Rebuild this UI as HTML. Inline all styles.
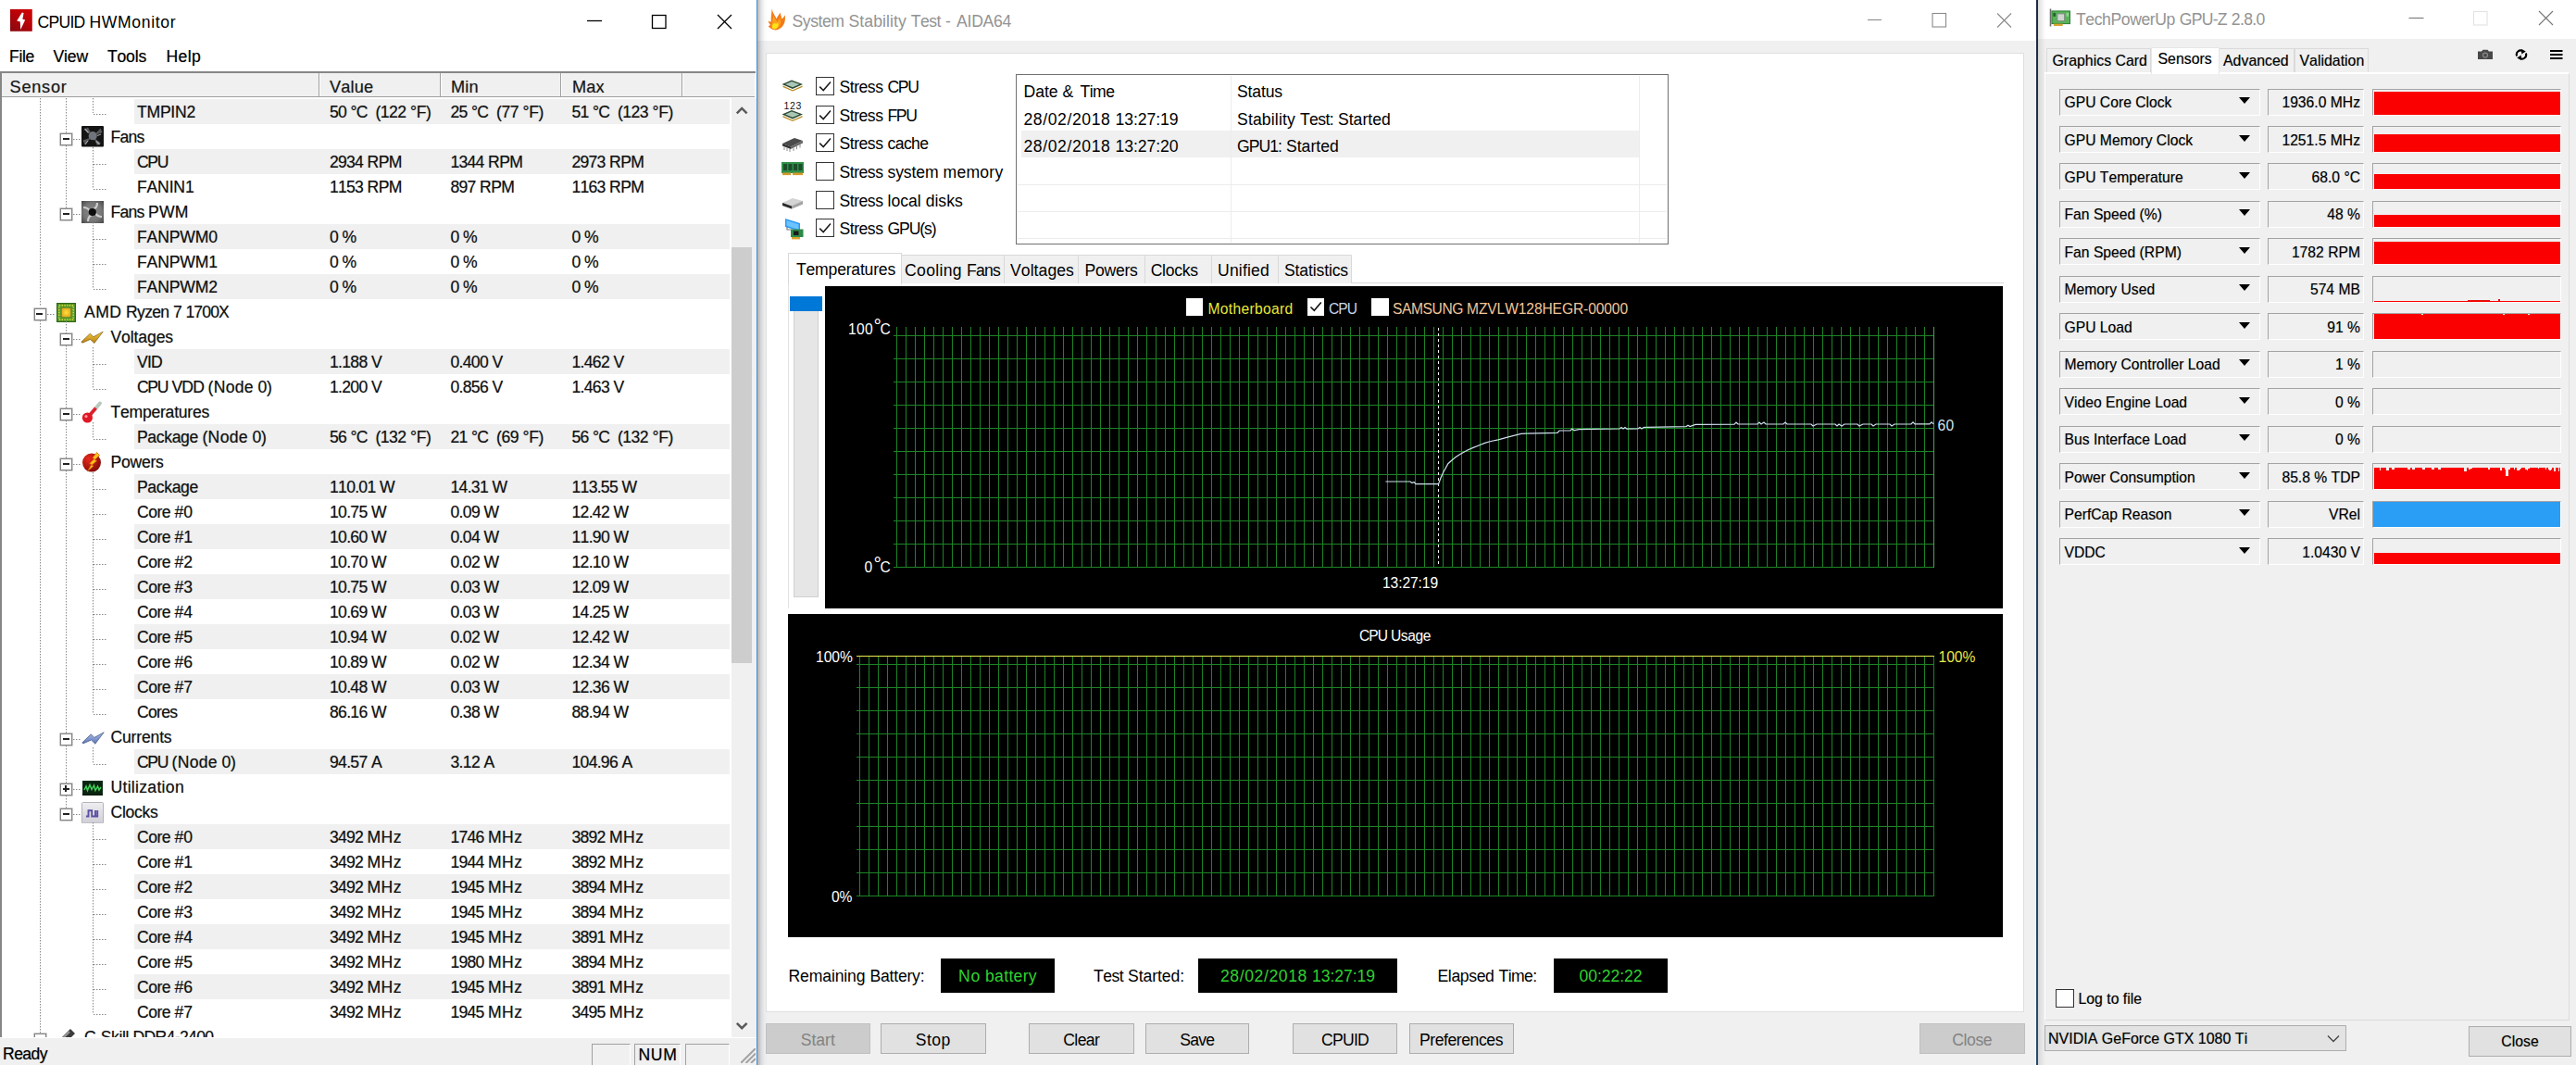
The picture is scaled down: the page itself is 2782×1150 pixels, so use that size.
<!DOCTYPE html>
<html lang="en"><head><meta charset="utf-8"><title>Stress test</title>
<style>
*{box-sizing:border-box;margin:0;padding:0}
html,body{width:2782px;height:1150px;overflow:hidden;background:#fff}
body{position:relative;font-family:"Liberation Sans",sans-serif;font-size:17.6px;color:#000;font-kerning:none}
b{font-weight:normal}
.a{position:absolute}
.t{position:absolute;white-space:nowrap;line-height:20px;height:20px}
/* ---------- HWMonitor ---------- */
#hw{position:absolute;left:0;top:0;width:817px;height:1150px;background:#fff;overflow:hidden}
#hw .row span,#hw .menu,#hw .hdr span,#hw .sbt{text-shadow:0 0 1px rgba(0,0,0,.4)}
#hw .title{left:40.5px;top:14px;font-size:17.6px;word-spacing:0.04px}
#hw .menu{top:50.5px;font-size:17.6px}
#hw .hdr{position:absolute;left:2px;top:79px;width:813px;height:26px;background:#f0f0f0;border-bottom:1px solid #a0a0a0}
#hw .hdr span{position:absolute;top:4.6px;font-size:18.2px;line-height:20px;color:#1a1a1a;letter-spacing:.15px}
#hw .hdr i{position:absolute;top:0;width:2px;height:25px;border-left:1px solid #a0a0a0;border-right:1px solid #fff}
.row{position:absolute;left:0;width:788px;height:27px}
.row .sh{position:absolute;left:144.5px;top:0;width:643.5px;height:26.5px;background:#f0f0f0}
.row span{position:absolute;top:4.2px;line-height:20px;white-space:pre;font-size:17.6px;word-spacing:-0.39px;color:#111}
.vd{position:absolute;width:1px;background-image:linear-gradient(#868686 0 1px,rgba(134,134,134,.45) 1px 2px,transparent 2px 3px);background-size:1px 3px}
.hd{position:absolute;height:1px;background-image:linear-gradient(90deg,#868686 0 1px,rgba(134,134,134,.45) 1px 2px,transparent 2px 3px);background-size:3px 1px}
.xb{position:absolute;width:13px;height:13px;border:1px solid #858585;background:#fff;box-shadow:0 0 0 .6px #a8a8a8}
.xb:before{content:"";position:absolute;left:1.7px;top:4.3px;width:7.2px;height:1.8px;background:#222}
.xb.p:after{content:"";position:absolute;left:4.4px;top:1.6px;width:1.8px;height:7.2px;background:#222}
</style></head>
<body>

<div id="hw">
<svg class="a" style="left:11px;top:10px" width="24" height="24" viewBox="0 0 24 24"><defs><linearGradient id="hwg" x1="1" y1="0" x2="0.2" y2="1"><stop offset="0" stop-color="#d40404"/><stop offset=".5" stop-color="#b80308"/><stop offset="1" stop-color="#8c0a10"/></linearGradient></defs><rect x="0" y="0" width="23.8" height="23.8" fill="url(#hwg)"/><path d="M12.8 3.4 L7.2 12.6 L10.8 13.6 L11.2 22 L16.2 11.4 L13.4 10.7 L14.6 3.9 Z" fill="#fff"/></svg>
<div class="t title"><b style="letter-spacing:-.75px">CPUID</b> <b style="letter-spacing:.64px">HWMonitor</b></div>
<svg class="a" style="left:620px;top:8px" width="190" height="30" viewBox="0 0 190 30"><g stroke="#000" stroke-width="1.3" fill="none"><path d="M14 14.5 H30"/><rect x="84.5" y="8.5" width="14.5" height="14"/><path d="M155 8 L170 23 M170 8 L155 23"/></g></svg>
<div class="a" style="left:0;top:0;width:817px;height:1150px">
<div class="t menu" style="left:10px"><b style="letter-spacing:-.34px">File</b></div>
<div class="t menu" style="left:57.5px"><b style="letter-spacing:-.16px">View</b></div>
<div class="t menu" style="left:116px"><b style="letter-spacing:-.21px">Tools</b></div>
<div class="t menu" style="left:179.5px"><b style="letter-spacing:.33px">Help</b></div>
<div class="a" style="left:0;top:77px;width:816px;height:2px;background:#868686"></div>
<div class="a" style="left:0;top:77px;width:2px;height:1043px;background:#868686"></div>
<div class="hdr"><span style="left:8.5px;letter-spacing:.75px">Sensor</span><span style="left:354px">Value</span><span style="left:485px">Min</span><span style="left:616px">Max</span>
<i style="left:342px"></i>
<i style="left:472.5px"></i>
<i style="left:603px"></i>
<i style="left:734px"></i>
</div>
<div class="a" style="left:2px;top:106px;width:786px;height:1014px;overflow:hidden">
<div class="a" style="left:-2px;top:-106px;width:790px;height:1130px">
<div class="vd" style="left:43px;top:106px;height:224px"></div>
<div class="vd" style="left:43px;top:343px;height:787px"></div>
<div class="row" style="top:107px">
<div class="sh"></div>
<div class="hd" style="left:101px;top:16px;width:15px"></div>
<span style="left:148px"><b style="letter-spacing:-.26px">TMPIN2</b></span><span style="left:356px"><b style="letter-spacing:-.79px">50</b> <b style="letter-spacing:-.87px">°C</b>  <b style="letter-spacing:-.56px">(122</b> <b style="letter-spacing:-.38px">°F)</b></span><span style="left:486.5px"><b style="letter-spacing:-.79px">25</b> <b style="letter-spacing:-.87px">°C</b>  <b style="letter-spacing:-.48px">(77</b> <b style="letter-spacing:-.38px">°F)</b></span><span style="left:617.5px"><b style="letter-spacing:-.79px">51</b> <b style="letter-spacing:-.87px">°C</b>  <b style="letter-spacing:-.56px">(123</b> <b style="letter-spacing:-.38px">°F)</b></span>
</div>
<div class="row" style="top:134px">
<div class="hd" style="left:79px;top:16px;width:9px"></div>
<div class="xb" style="left:65px;top:9.5px"></div>
<svg class="a" style="left:87.5px;top:2px" width="24" height="22.5" viewBox="0 0 24 22.5"><rect width="24" height="22.5" rx="1" fill="#141414"/><g fill="#55575b"><path d="M12 11 L3 4 L7 1.5 Z"/><path d="M12.5 11 L20.5 2.5 L22.5 7 Z"/><path d="M12.5 12 L21 18.5 L17 21 Z"/><path d="M11.5 12 L3.5 20 L1.5 15.5 Z"/></g><g stroke="#c9c9c9" stroke-width="1.2" opacity=".75"><path d="M3.5 3 L7.5 7.5 M21 9 L17 10.5 M19.5 20 L16 16.5 M4 20 L7 16"/></g><circle cx="12.2" cy="10.7" r="4.6" fill="#70747c"/></svg>
<span style="left:119.5px"><b style="letter-spacing:-.78px">Fans</b></span>
</div>
<div class="row" style="top:161px">
<div class="sh"></div>
<div class="hd" style="left:101px;top:16px;width:15px"></div>
<span style="left:148px"><b style="letter-spacing:-1.39px">CPU</b></span><span style="left:356px"><b style="letter-spacing:-.79px">2934</b> <b style="letter-spacing:-.54px">RPM</b></span><span style="left:486.5px"><b style="letter-spacing:-.79px">1344</b> <b style="letter-spacing:-.54px">RPM</b></span><span style="left:617.5px"><b style="letter-spacing:-.79px">2973</b> <b style="letter-spacing:-.54px">RPM</b></span>
</div>
<div class="row" style="top:188px">
<div class="hd" style="left:101px;top:16px;width:15px"></div>
<span style="left:148px"><b style="letter-spacing:-.18px">FANIN1</b></span><span style="left:356px"><b style="letter-spacing:-.79px">1153</b> <b style="letter-spacing:-.54px">RPM</b></span><span style="left:486.5px"><b style="letter-spacing:-.79px">897</b> <b style="letter-spacing:-.54px">RPM</b></span><span style="left:617.5px"><b style="letter-spacing:-.79px">1163</b> <b style="letter-spacing:-.54px">RPM</b></span>
</div>
<div class="row" style="top:215px">
<div class="hd" style="left:79px;top:16px;width:9px"></div>
<div class="xb" style="left:65px;top:9.5px"></div>
<svg class="a" style="left:87.5px;top:1.8px" width="24" height="24" viewBox="0 0 24 24"><defs><radialGradient id="pw" cx=".5" cy=".5" r=".75"><stop offset="0" stop-color="#8c8c8c"/><stop offset=".55" stop-color="#767676"/><stop offset="1" stop-color="#3c3c3c"/></radialGradient></defs><rect width="24" height="24" fill="url(#pw)"/><g stroke="#e2e2e2" stroke-width="2.2" fill="none" opacity=".8"><path d="M2 7 C6 7 8 9 9 11"/><path d="M17 2 C17 6 15 8 13 9"/><path d="M22 17 C18 17 16 15 15 13"/><path d="M7 22 C7 18 9 16 11 15"/></g><circle cx="11.8" cy="12" r="4.1" fill="#0d0d0d"/></svg>
<span style="left:119.5px"><b style="letter-spacing:-.78px">Fans</b> <b style="letter-spacing:.16px">PWM</b></span>
</div>
<div class="row" style="top:242px">
<div class="sh"></div>
<div class="hd" style="left:101px;top:16px;width:15px"></div>
<span style="left:148px"><b style="letter-spacing:-.14px">FANPWM0</b></span><span style="left:356px"><b style="letter-spacing:-.79px">0</b> <b style="letter-spacing:-.65px">%</b></span><span style="left:486.5px"><b style="letter-spacing:-.79px">0</b> <b style="letter-spacing:-.65px">%</b></span><span style="left:617.5px"><b style="letter-spacing:-.79px">0</b> <b style="letter-spacing:-.65px">%</b></span>
</div>
<div class="row" style="top:269px">
<div class="hd" style="left:101px;top:16px;width:15px"></div>
<span style="left:148px"><b style="letter-spacing:-.14px">FANPWM1</b></span><span style="left:356px"><b style="letter-spacing:-.79px">0</b> <b style="letter-spacing:-.65px">%</b></span><span style="left:486.5px"><b style="letter-spacing:-.79px">0</b> <b style="letter-spacing:-.65px">%</b></span><span style="left:617.5px"><b style="letter-spacing:-.79px">0</b> <b style="letter-spacing:-.65px">%</b></span>
</div>
<div class="row" style="top:296px">
<div class="sh"></div>
<div class="hd" style="left:101px;top:16px;width:15px"></div>
<span style="left:148px"><b style="letter-spacing:-.14px">FANPWM2</b></span><span style="left:356px"><b style="letter-spacing:-.79px">0</b> <b style="letter-spacing:-.65px">%</b></span><span style="left:486.5px"><b style="letter-spacing:-.79px">0</b> <b style="letter-spacing:-.65px">%</b></span><span style="left:617.5px"><b style="letter-spacing:-.79px">0</b> <b style="letter-spacing:-.65px">%</b></span>
</div>
<div class="row" style="top:323px">
<div class="hd" style="left:51px;top:16px;width:9px"></div>
<div class="xb" style="left:36.5px;top:9.5px"></div>
<svg class="a" style="left:60.5px;top:3.5px" width="21" height="21" viewBox="0 0 21 21"><rect x=".6" y=".6" width="19.8" height="19.8" fill="#5a9a2c" stroke="#2f6a18" stroke-width="1.2"/><rect x="2.8" y="2.8" width="15.4" height="15.4" fill="none" stroke="#d9dc3a" stroke-width="1.4" stroke-dasharray="1.4 1.4"/><defs><radialGradient id="cpg" cx=".5" cy=".5" r=".6"><stop offset="0" stop-color="#ffe23a"/><stop offset="1" stop-color="#e09a18"/></radialGradient></defs><rect x="5.2" y="5.2" width="10.6" height="10.6" fill="url(#cpg)" stroke="#4f8a22" stroke-width=".8"/></svg>
<span style="left:91px"><b style="letter-spacing:.46px">AMD</b> <b style="letter-spacing:-.68px">Ryzen</b> <b style="letter-spacing:-.79px">7</b> <b style="letter-spacing:-.88px">1700X</b></span>
</div>
<div class="row" style="top:350px">
<div class="hd" style="left:79px;top:16px;width:9px"></div>
<div class="xb" style="left:65px;top:9.5px"></div>
<svg class="a" style="left:87px;top:6.5px" width="25" height="14.5" viewBox="0 0 25 14.5"><defs><linearGradient id="vg" x1="0" y1="0" x2="0" y2="1"><stop offset="0" stop-color="#f7d23c"/><stop offset="1" stop-color="#b67c16"/></linearGradient></defs><path d="M0.8 12.3 L10.3 3.2 L13.8 6.8 L24.2 1.2 L14.8 13.6 L10.6 9.4 L2 13.2 Z" fill="url(#vg)" stroke="#7a5a14" stroke-width=".7"/></svg>
<span style="left:119.5px"><b style="letter-spacing:-.12px">Voltages</b></span>
</div>
<div class="row" style="top:377px">
<div class="sh"></div>
<div class="hd" style="left:101px;top:16px;width:15px"></div>
<span style="left:148px"><b style="letter-spacing:-.78px">VID</b></span><span style="left:356px"><b style="letter-spacing:-.71px">1.188</b> <b style="letter-spacing:-1.24px">V</b></span><span style="left:486.5px"><b style="letter-spacing:-.71px">0.400</b> <b style="letter-spacing:-1.24px">V</b></span><span style="left:617.5px"><b style="letter-spacing:-.71px">1.462</b> <b style="letter-spacing:-1.24px">V</b></span>
</div>
<div class="row" style="top:404px">
<div class="hd" style="left:101px;top:16px;width:15px"></div>
<span style="left:148px"><b style="letter-spacing:-1.39px">CPU</b> <b style="letter-spacing:-.89px">VDD</b> <b style="letter-spacing:.31px">(Node</b> <b style="letter-spacing:-.32px">0)</b></span><span style="left:356px"><b style="letter-spacing:-.71px">1.200</b> <b style="letter-spacing:-1.24px">V</b></span><span style="left:486.5px"><b style="letter-spacing:-.71px">0.856</b> <b style="letter-spacing:-1.24px">V</b></span><span style="left:617.5px"><b style="letter-spacing:-.71px">1.463</b> <b style="letter-spacing:-1.24px">V</b></span>
</div>
<div class="row" style="top:431px">
<div class="hd" style="left:79px;top:16px;width:9px"></div>
<div class="xb" style="left:65px;top:9.5px"></div>
<svg class="a" style="left:87px;top:0" width="25" height="27" viewBox="0 0 25 27"><path d="M9 18.5 L21 4.5" stroke="#b9c9c0" stroke-width="4" stroke-linecap="round"/><path d="M8 19.5 L16.5 9.6" stroke="#e0202c" stroke-width="3.6" stroke-linecap="butt"/><circle cx="7.4" cy="20" r="5.6" fill="#e01824"/><circle cx="6" cy="18.6" r="1.6" fill="#ff9aa0"/></svg>
<span style="left:119.5px"><b style="letter-spacing:-.25px">Temperatures</b></span>
</div>
<div class="row" style="top:458px">
<div class="sh"></div>
<div class="hd" style="left:101px;top:16px;width:15px"></div>
<span style="left:148px"><b style="letter-spacing:-.36px">Package</b> <b style="letter-spacing:.31px">(Node</b> <b style="letter-spacing:-.32px">0)</b></span><span style="left:356px"><b style="letter-spacing:-.79px">56</b> <b style="letter-spacing:-.87px">°C</b>  <b style="letter-spacing:-.56px">(132</b> <b style="letter-spacing:-.38px">°F)</b></span><span style="left:486.5px"><b style="letter-spacing:-.79px">21</b> <b style="letter-spacing:-.87px">°C</b>  <b style="letter-spacing:-.48px">(69</b> <b style="letter-spacing:-.38px">°F)</b></span><span style="left:617.5px"><b style="letter-spacing:-.79px">56</b> <b style="letter-spacing:-.87px">°C</b>  <b style="letter-spacing:-.56px">(132</b> <b style="letter-spacing:-.38px">°F)</b></span>
</div>
<div class="row" style="top:485px">
<div class="hd" style="left:79px;top:16px;width:9px"></div>
<div class="xb" style="left:65px;top:9.5px"></div>
<svg class="a" style="left:87.5px;top:2px" width="24" height="25" viewBox="0 0 24 25"><defs><radialGradient id="pg" cx=".35" cy=".3" r=".8"><stop offset="0" stop-color="#e8281c"/><stop offset="1" stop-color="#7c0a06"/></radialGradient></defs><circle cx="11" cy="12.6" r="10" fill="url(#pg)"/><path d="M16.5 1.5 L11.8 7.5 L13.8 8.4 L8.6 13.6 L10.8 14.4 L6.6 21.8 L13 16.2 L11.2 15.2 L16.6 10.6 L14.4 9.6 L19.5 4.5 Z" fill="#ffc21e" stroke="#d05a0a" stroke-width=".7"/></svg>
<span style="left:119.5px"><b style="letter-spacing:-.28px">Powers</b></span>
</div>
<div class="row" style="top:512px">
<div class="sh"></div>
<div class="hd" style="left:101px;top:16px;width:15px"></div>
<span style="left:148px"><b style="letter-spacing:-.36px">Package</b></span><span style="left:356px"><b style="letter-spacing:-.72px">110.01</b> <b style="letter-spacing:-.11px">W</b></span><span style="left:486.5px"><b style="letter-spacing:-.71px">14.31</b> <b style="letter-spacing:-.11px">W</b></span><span style="left:617.5px"><b style="letter-spacing:-.72px">113.55</b> <b style="letter-spacing:-.11px">W</b></span>
</div>
<div class="row" style="top:539px">
<div class="hd" style="left:101px;top:16px;width:15px"></div>
<span style="left:148px"><b style="letter-spacing:-.54px">Core</b> #0</span><span style="left:356px"><b style="letter-spacing:-.71px">10.75</b> <b style="letter-spacing:-.11px">W</b></span><span style="left:486.5px"><b style="letter-spacing:-.69px">0.09</b> <b style="letter-spacing:-.11px">W</b></span><span style="left:617.5px"><b style="letter-spacing:-.71px">12.42</b> <b style="letter-spacing:-.11px">W</b></span>
</div>
<div class="row" style="top:566px">
<div class="sh"></div>
<div class="hd" style="left:101px;top:16px;width:15px"></div>
<span style="left:148px"><b style="letter-spacing:-.54px">Core</b> #1</span><span style="left:356px"><b style="letter-spacing:-.71px">10.60</b> <b style="letter-spacing:-.11px">W</b></span><span style="left:486.5px"><b style="letter-spacing:-.69px">0.04</b> <b style="letter-spacing:-.11px">W</b></span><span style="left:617.5px"><b style="letter-spacing:-.71px">11.90</b> <b style="letter-spacing:-.11px">W</b></span>
</div>
<div class="row" style="top:593px">
<div class="hd" style="left:101px;top:16px;width:15px"></div>
<span style="left:148px"><b style="letter-spacing:-.54px">Core</b> #2</span><span style="left:356px"><b style="letter-spacing:-.71px">10.70</b> <b style="letter-spacing:-.11px">W</b></span><span style="left:486.5px"><b style="letter-spacing:-.69px">0.02</b> <b style="letter-spacing:-.11px">W</b></span><span style="left:617.5px"><b style="letter-spacing:-.71px">12.10</b> <b style="letter-spacing:-.11px">W</b></span>
</div>
<div class="row" style="top:620px">
<div class="sh"></div>
<div class="hd" style="left:101px;top:16px;width:15px"></div>
<span style="left:148px"><b style="letter-spacing:-.54px">Core</b> #3</span><span style="left:356px"><b style="letter-spacing:-.71px">10.75</b> <b style="letter-spacing:-.11px">W</b></span><span style="left:486.5px"><b style="letter-spacing:-.69px">0.03</b> <b style="letter-spacing:-.11px">W</b></span><span style="left:617.5px"><b style="letter-spacing:-.71px">12.09</b> <b style="letter-spacing:-.11px">W</b></span>
</div>
<div class="row" style="top:647px">
<div class="hd" style="left:101px;top:16px;width:15px"></div>
<span style="left:148px"><b style="letter-spacing:-.54px">Core</b> #4</span><span style="left:356px"><b style="letter-spacing:-.71px">10.69</b> <b style="letter-spacing:-.11px">W</b></span><span style="left:486.5px"><b style="letter-spacing:-.69px">0.03</b> <b style="letter-spacing:-.11px">W</b></span><span style="left:617.5px"><b style="letter-spacing:-.71px">14.25</b> <b style="letter-spacing:-.11px">W</b></span>
</div>
<div class="row" style="top:674px">
<div class="sh"></div>
<div class="hd" style="left:101px;top:16px;width:15px"></div>
<span style="left:148px"><b style="letter-spacing:-.54px">Core</b> #5</span><span style="left:356px"><b style="letter-spacing:-.71px">10.94</b> <b style="letter-spacing:-.11px">W</b></span><span style="left:486.5px"><b style="letter-spacing:-.69px">0.02</b> <b style="letter-spacing:-.11px">W</b></span><span style="left:617.5px"><b style="letter-spacing:-.71px">12.42</b> <b style="letter-spacing:-.11px">W</b></span>
</div>
<div class="row" style="top:701px">
<div class="hd" style="left:101px;top:16px;width:15px"></div>
<span style="left:148px"><b style="letter-spacing:-.54px">Core</b> #6</span><span style="left:356px"><b style="letter-spacing:-.71px">10.89</b> <b style="letter-spacing:-.11px">W</b></span><span style="left:486.5px"><b style="letter-spacing:-.69px">0.02</b> <b style="letter-spacing:-.11px">W</b></span><span style="left:617.5px"><b style="letter-spacing:-.71px">12.34</b> <b style="letter-spacing:-.11px">W</b></span>
</div>
<div class="row" style="top:728px">
<div class="sh"></div>
<div class="hd" style="left:101px;top:16px;width:15px"></div>
<span style="left:148px"><b style="letter-spacing:-.54px">Core</b> #7</span><span style="left:356px"><b style="letter-spacing:-.71px">10.48</b> <b style="letter-spacing:-.11px">W</b></span><span style="left:486.5px"><b style="letter-spacing:-.69px">0.03</b> <b style="letter-spacing:-.11px">W</b></span><span style="left:617.5px"><b style="letter-spacing:-.71px">12.36</b> <b style="letter-spacing:-.11px">W</b></span>
</div>
<div class="row" style="top:755px">
<div class="hd" style="left:101px;top:16px;width:15px"></div>
<span style="left:148px"><b style="letter-spacing:-.69px">Cores</b></span><span style="left:356px"><b style="letter-spacing:-.71px">86.16</b> <b style="letter-spacing:-.11px">W</b></span><span style="left:486.5px"><b style="letter-spacing:-.69px">0.38</b> <b style="letter-spacing:-.11px">W</b></span><span style="left:617.5px"><b style="letter-spacing:-.71px">88.94</b> <b style="letter-spacing:-.11px">W</b></span>
</div>
<div class="row" style="top:782px">
<div class="hd" style="left:79px;top:16px;width:9px"></div>
<div class="xb" style="left:65px;top:9.5px"></div>
<svg class="a" style="left:87.5px;top:7.5px" width="25" height="14" viewBox="0 0 25 14"><defs><linearGradient id="cug" x1="0" y1="0" x2="0" y2="1"><stop offset="0" stop-color="#a9bcea"/><stop offset="1" stop-color="#5f78b8"/></linearGradient></defs><path d="M0.8 12 L10.3 2.8 L13.8 6.4 L24.2 0.8 L14.8 13.2 L10.6 9 L2 12.8 Z" fill="url(#cug)" stroke="#3b4a78" stroke-width=".7"/></svg>
<span style="left:119.5px"><b style="letter-spacing:-.19px">Currents</b></span>
</div>
<div class="row" style="top:809px">
<div class="sh"></div>
<div class="hd" style="left:101px;top:16px;width:15px"></div>
<span style="left:148px"><b style="letter-spacing:-1.39px">CPU</b> <b style="letter-spacing:.31px">(Node</b> <b style="letter-spacing:-.32px">0)</b></span><span style="left:356px"><b style="letter-spacing:-.71px">94.57</b> <b style="letter-spacing:.26px">A</b></span><span style="left:486.5px"><b style="letter-spacing:-.69px">3.12</b> <b style="letter-spacing:.26px">A</b></span><span style="left:617.5px"><b style="letter-spacing:-.72px">104.96</b> <b style="letter-spacing:.26px">A</b></span>
</div>
<div class="row" style="top:836px">
<div class="hd" style="left:79px;top:16px;width:9px"></div>
<div class="xb p" style="left:65px;top:9.5px"></div>
<svg class="a" style="left:88.5px;top:6.5px" width="22" height="16.5" viewBox="0 0 22 16.5"><rect width="22" height="16.5" fill="#10301a"/><rect x="1" y="1" width="20" height="13" fill="#0a2410"/><path d="M2 10 L4 6 L5.5 10.5 L8 4.5 L10 9.5 L12.5 5 L14 10.5 L16.5 6 L18 10 L20 7" stroke="#3fcf58" stroke-width="1.5" fill="none"/><rect x="0" y="14.3" width="22" height="2.2" fill="#071a0b"/></svg>
<span style="left:119.5px"><b style="letter-spacing:.29px">Utilization</b></span>
</div>
<div class="row" style="top:863px">
<div class="hd" style="left:79px;top:16px;width:9px"></div>
<div class="xb" style="left:65px;top:9.5px"></div>
<svg class="a" style="left:88px;top:2.5px" width="24" height="23.5" viewBox="0 0 24 23.5"><defs><linearGradient id="cg" x1="0" y1="0" x2="0" y2="1"><stop offset="0" stop-color="#efeff2"/><stop offset=".5" stop-color="#dedee3"/><stop offset="1" stop-color="#cfcfd6"/></linearGradient></defs><rect x=".5" y=".5" width="23" height="22.5" rx="1" fill="url(#cg)" stroke="#b3b3ba"/><path d="M5 15.5 H7.5 V9.2 H11.2 V15.5 H15 V9 M15 15.5 H17.2 V9" stroke="#5a4fa2" stroke-width="1.9" fill="none"/></svg>
<span style="left:119.5px"><b style="letter-spacing:-.30px">Clocks</b></span>
</div>
<div class="row" style="top:890px">
<div class="sh"></div>
<div class="hd" style="left:101px;top:16px;width:15px"></div>
<span style="left:148px"><b style="letter-spacing:-.54px">Core</b> #0</span><span style="left:356px"><b style="letter-spacing:-.79px">3492</b> <b style="letter-spacing:.44px">MHz</b></span><span style="left:486.5px"><b style="letter-spacing:-.79px">1746</b> <b style="letter-spacing:.44px">MHz</b></span><span style="left:617.5px"><b style="letter-spacing:-.79px">3892</b> <b style="letter-spacing:.44px">MHz</b></span>
</div>
<div class="row" style="top:917px">
<div class="hd" style="left:101px;top:16px;width:15px"></div>
<span style="left:148px"><b style="letter-spacing:-.54px">Core</b> #1</span><span style="left:356px"><b style="letter-spacing:-.79px">3492</b> <b style="letter-spacing:.44px">MHz</b></span><span style="left:486.5px"><b style="letter-spacing:-.79px">1944</b> <b style="letter-spacing:.44px">MHz</b></span><span style="left:617.5px"><b style="letter-spacing:-.79px">3892</b> <b style="letter-spacing:.44px">MHz</b></span>
</div>
<div class="row" style="top:944px">
<div class="sh"></div>
<div class="hd" style="left:101px;top:16px;width:15px"></div>
<span style="left:148px"><b style="letter-spacing:-.54px">Core</b> #2</span><span style="left:356px"><b style="letter-spacing:-.79px">3492</b> <b style="letter-spacing:.44px">MHz</b></span><span style="left:486.5px"><b style="letter-spacing:-.79px">1945</b> <b style="letter-spacing:.44px">MHz</b></span><span style="left:617.5px"><b style="letter-spacing:-.79px">3894</b> <b style="letter-spacing:.44px">MHz</b></span>
</div>
<div class="row" style="top:971px">
<div class="hd" style="left:101px;top:16px;width:15px"></div>
<span style="left:148px"><b style="letter-spacing:-.54px">Core</b> #3</span><span style="left:356px"><b style="letter-spacing:-.79px">3492</b> <b style="letter-spacing:.44px">MHz</b></span><span style="left:486.5px"><b style="letter-spacing:-.79px">1945</b> <b style="letter-spacing:.44px">MHz</b></span><span style="left:617.5px"><b style="letter-spacing:-.79px">3894</b> <b style="letter-spacing:.44px">MHz</b></span>
</div>
<div class="row" style="top:998px">
<div class="sh"></div>
<div class="hd" style="left:101px;top:16px;width:15px"></div>
<span style="left:148px"><b style="letter-spacing:-.54px">Core</b> #4</span><span style="left:356px"><b style="letter-spacing:-.79px">3492</b> <b style="letter-spacing:.44px">MHz</b></span><span style="left:486.5px"><b style="letter-spacing:-.79px">1945</b> <b style="letter-spacing:.44px">MHz</b></span><span style="left:617.5px"><b style="letter-spacing:-.79px">3891</b> <b style="letter-spacing:.44px">MHz</b></span>
</div>
<div class="row" style="top:1025px">
<div class="hd" style="left:101px;top:16px;width:15px"></div>
<span style="left:148px"><b style="letter-spacing:-.54px">Core</b> #5</span><span style="left:356px"><b style="letter-spacing:-.79px">3492</b> <b style="letter-spacing:.44px">MHz</b></span><span style="left:486.5px"><b style="letter-spacing:-.79px">1980</b> <b style="letter-spacing:.44px">MHz</b></span><span style="left:617.5px"><b style="letter-spacing:-.79px">3894</b> <b style="letter-spacing:.44px">MHz</b></span>
</div>
<div class="row" style="top:1052px">
<div class="sh"></div>
<div class="hd" style="left:101px;top:16px;width:15px"></div>
<span style="left:148px"><b style="letter-spacing:-.54px">Core</b> #6</span><span style="left:356px"><b style="letter-spacing:-.79px">3492</b> <b style="letter-spacing:.44px">MHz</b></span><span style="left:486.5px"><b style="letter-spacing:-.79px">1945</b> <b style="letter-spacing:.44px">MHz</b></span><span style="left:617.5px"><b style="letter-spacing:-.79px">3891</b> <b style="letter-spacing:.44px">MHz</b></span>
</div>
<div class="row" style="top:1079px">
<div class="hd" style="left:101px;top:16px;width:15px"></div>
<span style="left:148px"><b style="letter-spacing:-.54px">Core</b> #7</span><span style="left:356px"><b style="letter-spacing:-.79px">3492</b> <b style="letter-spacing:.44px">MHz</b></span><span style="left:486.5px"><b style="letter-spacing:-.79px">1945</b> <b style="letter-spacing:.44px">MHz</b></span><span style="left:617.5px"><b style="letter-spacing:-.79px">3495</b> <b style="letter-spacing:.44px">MHz</b></span>
</div>
<div class="row" style="top:1106px">
<div class="hd" style="left:51px;top:16px;width:9px"></div>
<div class="xb" style="left:36.5px;top:9.5px"></div>
<svg class="a" style="left:60.5px;top:3px" width="22" height="21" viewBox="0 0 22 21"><path d="M2 15 L15 2 L20 7 L7 20 Z" fill="#3c3c3c"/><path d="M5 14 L14 5" stroke="#999" stroke-width="2"/></svg>
<span style="left:91px"><b style="letter-spacing:-.41px">G.Skill</b> <b style="letter-spacing:-.66px">DDR4-2400</b></span>
</div>
<div class="vd" style="left:71px;top:106px;height:37.5px"></div>
<div class="vd" style="left:71px;top:156.5px;height:68.0px"></div>
<div class="vd" style="left:71px;top:347px;height:12.5px"></div>
<div class="vd" style="left:71px;top:372.5px;height:68.0px"></div>
<div class="vd" style="left:71px;top:453.5px;height:41.0px"></div>
<div class="vd" style="left:71px;top:507.5px;height:284.0px"></div>
<div class="vd" style="left:71px;top:804.5px;height:41.0px"></div>
<div class="vd" style="left:71px;top:858.5px;height:14.0px"></div>
<div class="vd" style="left:100px;top:106px;height:16px"></div>
<div class="vd" style="left:100px;top:159px;height:44px"></div>
<div class="vd" style="left:100px;top:240px;height:71px"></div>
<div class="vd" style="left:100px;top:375px;height:44px"></div>
<div class="vd" style="left:100px;top:456px;height:17px"></div>
<div class="vd" style="left:100px;top:510px;height:260px"></div>
<div class="vd" style="left:100px;top:807px;height:17px"></div>
<div class="vd" style="left:100px;top:888px;height:206px"></div>
</div></div>
<div class="a" style="left:790px;top:106px;width:26.5px;height:1015px;background:#f0f0f0"></div>
<div class="a" style="left:790.4px;top:266.5px;width:22px;height:449.5px;background:#cdcdcd"></div>
<svg class="a" style="left:794px;top:114px" width="14" height="10" viewBox="0 0 14 10"><path d="M1.8 8.3 L7.2 2.9 L12.6 8.3" stroke="#5a5a5a" stroke-width="2.5" fill="none"/></svg>
<svg class="a" style="left:794px;top:1102px" width="14" height="10" viewBox="0 0 14 10"><path d="M1.8 2.8 L7.2 8.2 L12.6 2.8" stroke="#5a5a5a" stroke-width="2.5" fill="none"/></svg>
<div class="a" style="left:0;top:1120px;width:817px;height:30px;background:#f0f0f0;border-top:1px solid #fff"></div>
<div class="t sbt" style="left:3px;top:1128.3px"><b style="letter-spacing:-.58px">Ready</b></div>
<div class="a sbt" style="left:639px;top:1127px;width:42px;height:23px;border-left:1px solid #a0a0a0;border-top:1px solid #a0a0a0;border-right:1px solid #fff;line-height:22px;padding-left:3.5px"></div>
<div class="a sbt" style="left:685px;top:1127px;width:50px;height:23px;border-left:1px solid #a0a0a0;border-top:1px solid #a0a0a0;border-right:1px solid #fff;line-height:22px;padding-left:3.5px"><b style="letter-spacing:.64px">NUM</b></div>
<div class="a sbt" style="left:739.5px;top:1127px;width:48px;height:23px;border-left:1px solid #a0a0a0;border-top:1px solid #a0a0a0;border-right:1px solid #fff;line-height:22px;padding-left:3.5px"></div>
<svg class="a" style="left:800px;top:1132px" width="16" height="16" viewBox="0 0 16 16"><g stroke="#a2a2a2" stroke-width="2"><path d="M16 0 L0 16 M16 5.5 L5.5 16 M16 11 L11 16"/></g></svg>
</div>
</div>
<div class="a" style="left:817px;top:0;width:1px;height:1150px;background:#3f8fd8"></div>
<style>
#ai{position:absolute;left:818px;top:0;width:1381px;height:1150px;background:#f0f0f0;overflow:hidden;word-spacing:0.11px}
#ai .cb{position:absolute;left:63px;width:20px;height:20px;border:1px solid #333;background:#fff}
#ai .cl{position:absolute;left:88.5px;white-space:nowrap;line-height:20px;font-size:17.6px}
#ai .lg{position:absolute;white-space:nowrap;line-height:20px;font-size:17.6px}
#ai .tab{position:absolute;top:275px;height:31px;background:#f0f0f0;border:1px solid #d9d9d9;border-bottom:none;font-size:17.6px;line-height:20px;padding-top:6px;white-space:nowrap}
#ai .gt{position:absolute;white-space:nowrap;font-size:15.6px;line-height:18px;word-spacing:-0.33px}
#ai .btn{position:absolute;top:1105px;height:33px;background:#e1e1e1;border:1px solid #adadad;text-align:center;font-size:17.6px;line-height:35.5px}
#ai .btn.d{background:#cccccc;border-color:#bfbfbf;color:#838383}
#ai .bx{position:absolute;top:1035px;height:37px;background:#000;color:#2fd22f;text-align:center;font-size:17.6px;line-height:39.5px}
#ai .sl{position:absolute;top:1044.3px;white-space:nowrap;line-height:20px;font-size:17.6px}
</style>
<div id="ai">
<div class="a" style="left:0;top:0;width:1381px;height:44px;background:#fff"></div>
<div class="a" style="left:0;top:0;width:11px;height:1150px;background:linear-gradient(90deg,rgba(120,110,105,.5),rgba(160,170,185,.3) 38%,rgba(200,205,215,.12) 70%,rgba(255,255,255,0))"></div>
<svg class="a" style="left:11px;top:9px" width="20" height="24" viewBox="0 0 20 24"><path d="M4.6 0.4 C5.6 5 8 8.5 9.8 11.2 C10.5 8.5 12.5 7 13.5 4.6 C14.4 7.5 14.6 9.5 15.6 11.4 C16.8 10.4 17.6 9 18.7 7.2 C19.4 12 18.8 16.5 15.5 20 C13 22.8 9.8 23.8 7 23.3 C4.5 22.8 2.6 21.2 0.4 18.9 C1.6 18.9 2.4 18.6 3 18 C2 16.8 1 15.2 0.4 13.4 C1.8 14.3 2.8 14.6 3.8 14.4 C3.2 10 4.4 5.5 4.6 0.4 Z" fill="#f47a18"/><path d="M6.4 8 C7.6 11 9 13 10.6 14.6 C11.6 13 12.6 12 13.4 10 C14.6 13.4 14.4 17 12.4 19.8 C10.6 22.2 7.4 22.6 5.4 21 C3.8 19.6 4 17 5.2 15.4 C5 13 5.8 10.5 6.4 8 Z" fill="#f9a21e"/><path d="M7.6 16 C8.8 17.2 10.2 16.6 11.2 15.6 C12 17.6 11.6 20 9.8 21.6 C8.2 22.9 5.8 22.6 4.9 21 C4.2 19.4 5.4 17.2 7.6 16 Z" fill="#ffe414"/></svg>
<div class="t" style="left:37.5px;top:13px;color:#939393"><b style="letter-spacing:-.44px">System</b> <b style="letter-spacing:.08px">Stability</b> <b style="letter-spacing:-.54px">Test</b> <b style="letter-spacing:1.23px">-</b> <b style="letter-spacing:-.25px">AIDA64</b></div>
<svg class="a" style="left:1190px;top:8px" width="175" height="30" viewBox="0 0 175 30"><g stroke="#8a8a8a" stroke-width="1.1" fill="none"><path d="M9 13.5 H24"/><rect x="79" y="6.5" width="14.5" height="14.5"/><path d="M149 6.5 L164 21.5 M164 6.5 L149 21.5"/></g></svg>
<div class="a" style="left:8.5px;top:57px;width:1359.5px;height:1036px;background:#fff;border:1px solid #dfdfdf"></div>
<svg class="a" style="left:26px;top:86px" width="24" height="16" viewBox="0 0 24 16"><path d="M0.5 5 L11 0.5 L23 5 L12 10 Z" fill="#2d4a33"/><path d="M4 5 L11 2 L19.5 5 L12 8.2 Z" fill="#a9c7b7"/><path d="M1.5 6.5 L12 11.3 L22.5 6.5 L22.5 8 L12 12.6 L1.5 8 Z" fill="#b98b1f"/></svg>
<div class="cb" style="top:83.0px">
<svg class="a" style="left:0;top:0" width="18" height="18" viewBox="0 0 18 18"><path d="M3.2 9.6 L7.2 13.6 L15 4.6" stroke="#1a1a1a" stroke-width="1.5" fill="none"/></svg>
</div>
<div class="cl" style="top:84.0px"><b style="letter-spacing:-.48px">Stress</b> <b style="letter-spacing:-1.39px">CPU</b></div>
<svg class="a" style="left:26px;top:108.5px" width="24" height="28" viewBox="0 0 24 28"><text x="2.5" y="8.5" font-family="Liberation Sans,sans-serif" font-size="10.5" fill="#111" letter-spacing=".7">123</text><g transform="translate(0,9.5)"><path d="M0.5 5 L11 0.5 L23 5 L12 10 Z" fill="#2d4a33"/><path d="M4 5 L11 2 L19.5 5 L12 8.2 Z" fill="#a9c7b7"/><path d="M1.5 6.5 L12 11.3 L22.5 6.5 L22.5 8 L12 12.6 L1.5 8 Z" fill="#b98b1f"/></g></svg>
<div class="cb" style="top:113.7px">
<svg class="a" style="left:0;top:0" width="18" height="18" viewBox="0 0 18 18"><path d="M3.2 9.6 L7.2 13.6 L15 4.6" stroke="#1a1a1a" stroke-width="1.5" fill="none"/></svg>
</div>
<div class="cl" style="top:114.7px"><b style="letter-spacing:-.48px">Stress</b> <b style="letter-spacing:-1.40px">FPU</b></div>
<svg class="a" style="left:26px;top:147px" width="24" height="18" viewBox="0 0 24 18"><path d="M1 8 L14 2 L23 5 L10 11.5 Z" fill="#4b4b4b"/><path d="M1 8 L10 11.5 L10 14 L1 10.5 Z" fill="#2f2f2f"/><path d="M10 11.5 L23 5 L23 7.5 L10 14 Z" fill="#666"/><g stroke="#8d8d8d" stroke-width="1"><path d="M3 11.5 V15 M6 12.6 V16 M9 13.7 V17 M13 12.5 V16 M16.5 10.8 V14.2 M20 9 V12.5"/></g></svg>
<div class="cb" style="top:144.3px">
<svg class="a" style="left:0;top:0" width="18" height="18" viewBox="0 0 18 18"><path d="M3.2 9.6 L7.2 13.6 L15 4.6" stroke="#1a1a1a" stroke-width="1.5" fill="none"/></svg>
</div>
<div class="cl" style="top:145.3px"><b style="letter-spacing:-.48px">Stress</b> <b style="letter-spacing:-.59px">cache</b></div>
<svg class="a" style="left:26px;top:175px" width="24" height="15" viewBox="0 0 24 15"><rect x="0" y="0" width="24" height="12" fill="#2f8f4a"/><g fill="#1d4d2b"><rect x="2" y="2" width="4" height="7"/><rect x="7.5" y="2" width="4" height="7"/><rect x="13" y="2" width="4" height="7"/><rect x="18.5" y="2" width="4" height="7"/></g><rect x="1" y="11.5" width="9" height="2.6" fill="#d89a2b"/><rect x="12" y="11.5" width="11" height="2.6" fill="#d89a2b"/></svg>
<div class="cb" style="top:174.9px">
</div>
<div class="cl" style="top:175.9px"><b style="letter-spacing:-.48px">Stress</b> <b style="letter-spacing:-.12px">system</b> <b style="letter-spacing:.24px">memory</b></div>
<svg class="a" style="left:26px;top:212.5px" width="24" height="13" viewBox="0 0 24 13"><path d="M1 6 L12 1 L23 4 L23 7.5 L11 12.5 L1 9 Z" fill="#d4d4d4"/><path d="M1 6 L11 9.5 L11 12.5 L1 9 Z" fill="#2b2b2b"/><path d="M11 9.5 L23 4 L23 7.5 L11 12.5 Z" fill="#a5a5a5"/></svg>
<div class="cb" style="top:205.6px">
</div>
<div class="cl" style="top:206.6px"><b style="letter-spacing:-.48px">Stress</b> local disks</div>
<svg class="a" style="left:29px;top:235px" width="22" height="24" viewBox="0 0 22 24"><path d="M1 1 L17 6 L17 15 L1 10 Z" fill="#2e9bf0"/><path d="M2.5 3 L15.5 7.2 L15.5 13 L2.5 8.8 Z" fill="#6cc3ff"/><rect x="7" y="12.5" width="13.5" height="8.5" fill="#2c8a47"/><rect x="10" y="14.5" width="5.5" height="4.5" fill="#1a1a1a"/><rect x="8" y="21" width="9" height="2.4" fill="#e0a32a"/><path d="M3 10 V13 H7" stroke="#7a7a7a" stroke-width="1.2" fill="none"/></svg>
<div class="cb" style="top:236.2px">
<svg class="a" style="left:0;top:0" width="18" height="18" viewBox="0 0 18 18"><path d="M3.2 9.6 L7.2 13.6 L15 4.6" stroke="#1a1a1a" stroke-width="1.5" fill="none"/></svg>
</div>
<div class="cl" style="top:237.2px"><b style="letter-spacing:-.48px">Stress</b> <b style="letter-spacing:-1.11px">GPU(s)</b></div>
<div class="a" style="left:279px;top:80px;width:705px;height:184px;border:1px solid #707070;background:#fff"></div>
<div class="a" style="left:285px;top:141px;width:667px;height:29px;background:#f0f0f0"></div>
<div class="a" style="left:281px;top:199px;width:701px;height:1px;background:#ececec"></div>
<div class="a" style="left:281px;top:228px;width:701px;height:1px;background:#ececec"></div>
<div class="a" style="left:281px;top:257px;width:701px;height:1px;background:#ececec"></div>
<div class="a" style="left:511px;top:82px;width:1px;height:180px;background:#ececec"></div>
<div class="a" style="left:952px;top:82px;width:1px;height:180px;background:#ececec"></div>
<div class="lg" style="left:287.5px;top:89px"><b style="letter-spacing:-.04px">Date</b> <b style="letter-spacing:2.26px">&amp;</b> <b style="letter-spacing:-.53px">Time</b></div><div class="lg" style="left:518px;top:89px"><b style="letter-spacing:-.15px">Status</b></div>
<div class="lg" style="left:287.5px;top:118.5px"><b style="letter-spacing:.59px">28/02/2018</b> <b style="letter-spacing:-.06px">13:27:19</b></div><div class="lg" style="left:518px;top:118.5px"><b style="letter-spacing:.15px">Stability</b> <b style="letter-spacing:-.62px">Test:</b> Started</div>
<div class="lg" style="left:287.5px;top:147.5px"><b style="letter-spacing:.59px">28/02/2018</b> <b style="letter-spacing:-.06px">13:27:20</b></div><div class="lg" style="left:518px;top:147.5px"><b style="letter-spacing:-.96px">GPU1:</b> Started</div>
<div class="a" style="left:33px;top:305px;width:1313px;height:1px;background:#d9d9d9"></div>
<div class="a" style="left:33px;top:305px;width:1px;height:352px;background:#e3e3e3"></div>
<div class="tab" style="left:154.5px;width:113px;padding-left:3.5px"><b style="letter-spacing:.33px">Cooling</b> <b style="letter-spacing:-.78px">Fans</b></div>
<div class="tab" style="left:266px;width:81.5px;padding-left:6px"><b style="letter-spacing:.06px">Voltages</b></div>
<div class="tab" style="left:346px;width:73px;padding-left:6.5px"><b style="letter-spacing:-.28px">Powers</b></div>
<div class="tab" style="left:417.5px;width:73.5px;padding-left:6.199999999999989px"><b style="letter-spacing:-.30px">Clocks</b></div>
<div class="tab" style="left:489.5px;width:73.5px;padding-left:6.5px"><b style="letter-spacing:.17px">Unified</b></div>
<div class="tab" style="left:561.5px;width:80px;padding-left:6.5px"><b style="letter-spacing:-.14px">Statistics</b></div>
<div class="tab" style="left:33px;top:273px;width:122.5px;height:33.5px;background:#fff;padding-left:8px;padding-top:6.5px"><b style="letter-spacing:-.21px">Temperatures</b></div>
<div class="a" style="left:39px;top:335px;width:27px;height:310px;background:#e6e6e6;border:1px solid #d0d0d0"></div>
<div class="a" style="left:35px;top:320px;width:35px;height:16px;background:#0078d7"></div>
<div class="a" style="left:73px;top:309px;width:1272px;height:348px;background:#000"></div>
<svg class="a" style="left:0;top:0" width="1381" height="660" viewBox="0 0 1381 660" shape-rendering="crispEdges"><path d="M150.5 353V613M160.5 353V613M170.5 353V613M180.5 353V613M190.5 353V613M200.5 353V613M210.5 353V613M220.5 353V613M230.5 353V613M240.5 353V613M250.5 353V613M260.5 353V613M270.5 353V613M280.5 353V613M290.5 353V613M300.5 353V613M310.5 353V613M320.5 353V613M330.5 353V613M340.5 353V613M350.5 353V613M360.5 353V613M370.5 353V613M380.5 353V613M390.5 353V613M400.5 353V613M410.5 353V613M420.5 353V613M430.5 353V613M440.5 353V613M450.5 353V613M460.5 353V613M470.5 353V613M480.5 353V613M490.5 353V613M500.5 353V613M510.5 353V613M520.5 353V613M530.5 353V613M540.5 353V613M550.5 353V613M560.5 353V613M570.5 353V613M580.5 353V613M590.5 353V613M600.5 353V613M610.5 353V613M620.5 353V613M630.5 353V613M640.5 353V613M650.5 353V613M660.5 353V613M670.5 353V613M680.5 353V613M690.5 353V613M700.5 353V613M710.5 353V613M720.5 353V613M730.5 353V613M740.5 353V613M750.5 353V613M760.5 353V613M770.5 353V613M780.5 353V613M790.5 353V613M800.5 353V613M810.5 353V613M820.5 353V613M830.5 353V613M840.5 353V613M850.5 353V613M860.5 353V613M870.5 353V613M880.5 353V613M890.5 353V613M900.5 353V613M910.5 353V613M920.5 353V613M930.5 353V613M940.5 353V613M950.5 353V613M960.5 353V613M970.5 353V613M980.5 353V613M990.5 353V613M1000.5 353V613M1010.5 353V613M1020.5 353V613M1030.5 353V613M1040.5 353V613M1050.5 353V613M1060.5 353V613M1070.5 353V613M1080.5 353V613M1090.5 353V613M1100.5 353V613M1110.5 353V613M1120.5 353V613M1130.5 353V613M1140.5 353V613M1150.5 353V613M1160.5 353V613M1170.5 353V613M1180.5 353V613M1190.5 353V613M1200.5 353V613M1210.5 353V613M1220.5 353V613M1230.5 353V613M1240.5 353V613M1250.5 353V613M1260.5 353V613M1270.5 353V613M147 362.5H1271M147 387.5H1271M147 412.5H1271M147 437.5H1271M147 462.5H1271M147 487.5H1271M147 512.5H1271M147 537.5H1271M147 562.5H1271M147 587.5H1271M147 612.5H1271" stroke="#1d8426" stroke-width="1" fill="none"/><path d="M1270.5 353V613" stroke="#5c9a5c" stroke-width="1"/><path d="M735.5 354V610" stroke="#fff" stroke-width="1" stroke-dasharray="3 3"/></svg>
<svg class="a" style="left:0;top:0" width="1381" height="660" viewBox="0 0 1381 660"><polyline points="678.4,520 705.0,520 707.0,521.5 709.0,520.5 711.0,522.6 735.5,522.6 738.0,516 741.0,509.5 746.0,500.5 750.0,497 753.5,494 758.0,491 762.0,488.7 767.0,486 773.0,483.4 779.0,481 785.5,478.4 792.0,476.5 800.0,474.8 810.0,472.2 824.7,468.4 830.0,468.2 864.0,467.3 866.0,465 878.0,464.8 880.0,463 882.0,464.8 887.0,463.7 931.0,463 933.0,461.5 935.0,463 937.0,461.5 939.0,463.2 951.0,463 953.0,461.5 955.0,463 957.0,461.5 959.0,461.3 1003.0,460.6 1005.0,459.3 1007.0,460.6 1013.0,458.4 1055.0,458.2 1057.0,456.2 1059.0,458 1080.0,458 1082.0,456 1084.0,458 1087.0,456 1089.0,458 1108.0,458 1110.0,456 1112.0,458 1138.0,458 1140.0,460 1144.0,458 1164.0,458 1166.0,460 1168.0,458 1171.0,460 1174.0,458 1188.0,458 1190.0,460 1194.0,458 1203.0,458 1205.0,460 1208.0,458 1223.0,458 1225.0,460 1228.0,458 1246.0,457.8 1248.0,455.8 1250.0,457.8 1266.0,457.8 1268.0,455.8 1270.0,457.8" stroke="#cfe2ee" stroke-width="1.2" fill="none"/></svg>
<div class="gt" style="left:98px;top:347px;color:#fff"><b style="letter-spacing:.32px">100</b></div><div class="gt" style="left:125.6px;top:340.5px;color:#fff;font-size:21px;line-height:21px">°</div><div class="gt" style="left:132.5px;top:347px;color:#fff"><b style="letter-spacing:-1.27px">C</b></div>
<div class="gt" style="left:115.5px;top:604px;color:#fff"><b style="letter-spacing:.32px">0</b></div><div class="gt" style="left:125.6px;top:597.5px;color:#fff;font-size:21px;line-height:21px">°</div><div class="gt" style="left:132.5px;top:604px;color:#fff"><b style="letter-spacing:-1.27px">C</b></div>
<div class="gt" style="left:675px;top:620.5px;color:#fff"><b style="letter-spacing:-.09px">13:27:19</b></div>
<div class="gt" style="left:1274.5px;top:450.5px;color:#cfe2ee"><b style="letter-spacing:.32px">60</b></div>
<div class="a" style="left:462.5px;top:322px;width:18.5px;height:18.5px;background:#fff">
</div>
<div class="a" style="left:593.5px;top:322px;width:18.5px;height:18.5px;background:#fff">
<svg class="a" style="left:0;top:0" width="18" height="18" viewBox="0 0 18 18"><path d="M3.5 9.5 L7.3 13.3 L14.8 4.6" stroke="#111" stroke-width="1.6" fill="none"/></svg>
</div>
<div class="a" style="left:663px;top:322px;width:18.5px;height:18.5px;background:#fff">
</div>
<div class="gt" style="left:486.5px;top:324.5px;color:#e8e83a;"><b style="letter-spacing:.32px">Motherboard</b></div>
<div class="gt" style="left:617px;top:324.5px;color:#c6d6ea;"><b style="letter-spacing:-.98px">CPU</b></div>
<div class="gt" style="left:686px;top:324.5px;color:#f2c69a;"><b style="letter-spacing:-.41px">SAMSUNG</b> <b style="letter-spacing:-.11px">MZVLW128HEGR-00000</b></div>
<div class="a" style="left:33px;top:663px;width:1312px;height:349px;background:#000"></div>
<svg class="a" style="left:0;top:660px" width="1381" height="360" viewBox="0 660 1381 360" shape-rendering="crispEdges"><path d="M110.5 708V968M120.5 708V968M130.5 708V968M140.5 708V968M150.5 708V968M160.5 708V968M170.5 708V968M180.5 708V968M190.5 708V968M200.5 708V968M210.5 708V968M220.5 708V968M230.5 708V968M240.5 708V968M250.5 708V968M260.5 708V968M270.5 708V968M280.5 708V968M290.5 708V968M300.5 708V968M310.5 708V968M320.5 708V968M330.5 708V968M340.5 708V968M350.5 708V968M360.5 708V968M370.5 708V968M380.5 708V968M390.5 708V968M400.5 708V968M410.5 708V968M420.5 708V968M430.5 708V968M440.5 708V968M450.5 708V968M460.5 708V968M470.5 708V968M480.5 708V968M490.5 708V968M500.5 708V968M510.5 708V968M520.5 708V968M530.5 708V968M540.5 708V968M550.5 708V968M560.5 708V968M570.5 708V968M580.5 708V968M590.5 708V968M600.5 708V968M610.5 708V968M620.5 708V968M630.5 708V968M640.5 708V968M650.5 708V968M660.5 708V968M670.5 708V968M680.5 708V968M690.5 708V968M700.5 708V968M710.5 708V968M720.5 708V968M730.5 708V968M740.5 708V968M750.5 708V968M760.5 708V968M770.5 708V968M780.5 708V968M790.5 708V968M800.5 708V968M810.5 708V968M820.5 708V968M830.5 708V968M840.5 708V968M850.5 708V968M860.5 708V968M870.5 708V968M880.5 708V968M890.5 708V968M900.5 708V968M910.5 708V968M920.5 708V968M930.5 708V968M940.5 708V968M950.5 708V968M960.5 708V968M970.5 708V968M980.5 708V968M990.5 708V968M1000.5 708V968M1010.5 708V968M1020.5 708V968M1030.5 708V968M1040.5 708V968M1050.5 708V968M1060.5 708V968M1070.5 708V968M1080.5 708V968M1090.5 708V968M1100.5 708V968M1110.5 708V968M1120.5 708V968M1130.5 708V968M1140.5 708V968M1150.5 708V968M1160.5 708V968M1170.5 708V968M1180.5 708V968M1190.5 708V968M1200.5 708V968M1210.5 708V968M1220.5 708V968M1230.5 708V968M1240.5 708V968M1250.5 708V968M1260.5 708V968M1270.5 708V968M107 717.5H1271M107 742.5H1271M107 767.5H1271M107 792.5H1271M107 817.5H1271M107 842.5H1271M107 867.5H1271M107 892.5H1271M107 917.5H1271M107 942.5H1271M107 967.5H1271" stroke="#1d8426" stroke-width="1" fill="none"/><path d="M107 708.5H1271" stroke="#e9e94e" stroke-width="1.6"/></svg>
<div class="gt" style="left:650px;top:677.5px;color:#fff;width:72px;text-align:center"><b style="letter-spacing:-.98px">CPU</b> <b style="letter-spacing:-.42px">Usage</b></div>
<div class="gt" style="left:63px;top:700.5px;color:#fff">100%</div>
<div class="gt" style="left:80px;top:959.5px;color:#fff"><b style="letter-spacing:-.27px">0%</b></div>
<div class="gt" style="left:1275.5px;top:700.5px;color:#e8e84a">100%</div>
<div class="sl" style="left:33.5px"><b style="letter-spacing:-.13px">Remaining</b> <b style="letter-spacing:-.21px">Battery:</b></div><div class="bx" style="left:198px;width:123px"><b style="letter-spacing:.75px">No</b> <b style="letter-spacing:.31px">battery</b></div>
<div class="sl" style="left:363px"><b style="letter-spacing:-.56px">Test</b> <b style="letter-spacing:-.08px">Started:</b></div><div class="bx" style="left:476px;width:215px"><b style="letter-spacing:.59px">28/02/2018</b> <b style="letter-spacing:-.06px">13:27:19</b></div>
<div class="sl" style="left:734.5px"><b style="letter-spacing:-.37px">Elapsed</b> <b style="letter-spacing:-.60px">Time:</b></div><div class="bx" style="left:860px;width:123px"><b style="letter-spacing:-.06px">00:22:22</b></div>
<div class="btn d" style="left:9px;width:112.5px">Start</div>
<div class="btn" style="left:133px;width:113.5px"><b style="letter-spacing:.45px">Stop</b></div>
<div class="btn" style="left:293px;width:113.5px"><b style="letter-spacing:-.61px">Clear</b></div>
<div class="btn" style="left:418.5px;width:112.5px"><b style="letter-spacing:-.78px">Save</b></div>
<div class="btn" style="left:578px;width:113px"><b style="letter-spacing:-.75px">CPUID</b></div>
<div class="btn" style="left:703.5px;width:113px"><b style="letter-spacing:-.44px">Preferences</b></div>
<div class="btn d" style="left:1255px;width:113.5px"><b style="letter-spacing:-.40px">Close</b></div>
</div>
<style>
#gz{position:absolute;left:2199px;top:0;width:583px;height:1150px;background:#f0f0f0;overflow:hidden;font-size:15.8px}
#gz .tab{position:absolute;top:52px;height:26px;background:#f0f0f0;border:1px solid #dadada;border-bottom:none;white-space:nowrap;line-height:20px;padding-top:2.5px;font-size:15.9px}
#gz .sb{position:absolute;height:29px;border:1px solid;border-color:#a3a3a3 #fff #fff #a3a3a3;background:#f0f0f0;white-space:nowrap;line-height:20px;padding-top:4.5px;font-size:15.7px}
#gz .sb.l{left:25px;width:217px;padding-left:4.5px}
#gz .sb.v{left:250px;width:104px;text-align:right;padding-right:3px}
#gz .sb.b{left:363px;width:204px;overflow:hidden;padding:0}
#gz .sb.l:after{content:"";position:absolute;left:193px;top:8.5px;border:6.7px solid transparent;border-top:7px solid #000;border-bottom:none}
#gz .sb,#gz .tab,#gz .bt{text-shadow:0 0 1px rgba(0,0,0,.35)}
#gz .f{position:absolute;left:1px;right:0;bottom:0;background:#fa0000}
</style>
<div id="gz">
<div class="a" style="left:0;top:0;width:583px;height:42px;background:#fff"></div>
<div class="a" style="left:0;top:0;width:2px;height:1150px;background:linear-gradient(#1c2c42,#244a70)"></div>
<div class="a" style="left:2px;top:0;width:8px;height:1150px;background:linear-gradient(90deg,rgba(190,190,190,.5),rgba(240,240,240,0))"></div>
<svg class="a" style="left:13.5px;top:8.8px" width="23.5" height="20.5" viewBox="0 0 24 21"><path d="M1.5 0.5 V20" stroke="#6d6d6d" stroke-width="1.6"/><rect x="3" y="3" width="20" height="14" fill="#56b455"/><rect x="3" y="3" width="20" height="14" fill="none" stroke="#2b7a36"/><rect x="9" y="6" width="8" height="8" fill="#cfd6d0" stroke="#7d8a80"/><rect x="5" y="17" width="10" height="2.5" fill="#d6a22e"/><rect x="4.5" y="5" width="2.5" height="4" fill="#1e5b29"/><rect x="19" y="5" width="2.5" height="4" fill="#8fd49a"/></svg>
<div class="t" style="left:43px;top:10.5px;font-size:17.6px;color:#939393"><b style="letter-spacing:-.41px">TechPowerUp</b> <b style="letter-spacing:-.75px">GPU-Z</b> <b style="letter-spacing:-.62px">2.8.0</b></div>
<svg class="a" style="left:395px;top:5px" width="175" height="30" viewBox="0 0 175 30"><g stroke-width="1.1" fill="none"><path d="M7.5 14.5 H23.5" stroke="#777"/><rect x="77.5" y="7.5" width="14.5" height="14.5" stroke="#e2e2e2"/><path d="M148 7 L163 22 M163 7 L148 22" stroke="#777"/></g></svg>
<div class="a" style="left:2px;top:43px;width:581px;height:1107px;overflow:hidden"><div class="a" style="left:-2px;top:-43px;width:583px;height:1150px">
<div class="a" style="left:9px;top:77.5px;width:567px;height:1024px;border:1.5px solid #fff;border-top-width:2px;border-right:1px solid #dcdcdc;border-bottom:1px solid #dcdcdc;background:#f0f0f0"></div>
<div class="tab" style="left:11px;width:113px;padding-left:5.5px">Graphics Card</div>
<div class="tab" style="left:197px;width:82px;padding-left:4px">Advanced</div>
<div class="tab" style="left:278.5px;width:80.5px;padding-left:5.0px">Validation</div>
<div class="tab" style="left:123.5px;top:50.5px;width:74px;height:29px;background:#fff;border-color:#e6e6e6;padding-left:7px;padding-top:2.5px">Sensors</div>
<svg class="a" style="left:476px;top:53px" width="100" height="12" viewBox="0 0 100 12"><g fill="#484848"><path d="M1 2.5 H5 L6.5 0.8 H11.5 L13 2.5 H17 V11 H1 Z"/></g><circle cx="9" cy="6.6" r="3.1" fill="#8a8a8a"/><circle cx="9" cy="6.6" r="1.9" fill="#484848"/><g stroke="#000" stroke-width="2.1" fill="none"><path d="M43.2 7.5 A4.3 4.3 0 0 1 49.5 2.2"/><path d="M52.8 4.5 A4.3 4.3 0 0 1 46.5 9.8"/></g><path d="M48.2 0 L52.8 2.6 L48.2 5.4 Z M47.8 12 L43.2 9.4 L47.8 6.6 Z" fill="#000"/><g fill="#000"><rect x="79" y="1" width="13.5" height="2"/><rect x="79" y="5" width="13.5" height="2"/><rect x="79" y="9" width="13.5" height="2"/></g></svg>
<div class="sb l" style="top:95.5px">GPU Core Clock</div><div class="sb v" style="top:95.5px">1936.0 MHz</div>
<div class="sb b" style="top:95.5px">
<div class="f" style="height:24.6px"></div>
</div>
<div class="sb l" style="top:136.0px">GPU Memory Clock</div><div class="sb v" style="top:136.0px">1251.5 MHz</div>
<div class="sb b" style="top:136.0px">
<div class="f" style="height:18.6px"></div>
</div>
<div class="sb l" style="top:176.4px">GPU Temperature</div><div class="sb v" style="top:176.4px">68.0 °C</div>
<div class="sb b" style="top:176.4px">
<div class="f" style="height:16.4px"></div>
</div>
<div class="sb l" style="top:216.9px">Fan Speed (%)</div><div class="sb v" style="top:216.9px">48 %</div>
<div class="sb b" style="top:216.9px">
<div class="f" style="height:12.7px"></div>
</div>
<div class="sb l" style="top:257.4px">Fan Speed (RPM)</div><div class="sb v" style="top:257.4px">1782 RPM</div>
<div class="sb b" style="top:257.4px">
<div class="f" style="height:24.5px"></div>
</div>
<div class="sb l" style="top:297.9px">Memory Used</div><div class="sb v" style="top:297.9px">574 MB</div>
<div class="sb b" style="top:297.9px">
<div class="f" style="height:1.2px"></div>
<div class="a" style="left:102px;bottom:1px;width:24px;height:1.3px;background:#e01010"></div><div class="a" style="left:135px;bottom:1px;width:2px;height:1.5px;background:#e01010"></div>
</div>
<div class="sb l" style="top:338.3px">GPU Load</div><div class="sb v" style="top:338.3px">91 %</div>
<div class="sb b" style="top:338.3px">
<div class="f" style="height:27.5px"></div>
<div class="a" style="left:52px;bottom:26.0px;width:1.5px;height:1.5px;background:#f0f0f0"></div>
<div class="a" style="left:140px;bottom:26.0px;width:1.5px;height:1.5px;background:#f0f0f0"></div>
<div class="a" style="left:167px;bottom:26.0px;width:1.5px;height:1.5px;background:#f0f0f0"></div>
</div>
<div class="sb l" style="top:378.8px">Memory Controller Load</div><div class="sb v" style="top:378.8px">1 %</div>
<div class="sb b" style="top:378.8px">
</div>
<div class="sb l" style="top:419.3px">Video Engine Load</div><div class="sb v" style="top:419.3px">0 %</div>
<div class="sb b" style="top:419.3px">
</div>
<div class="sb l" style="top:459.7px">Bus Interface Load</div><div class="sb v" style="top:459.7px">0 %</div>
<div class="sb b" style="top:459.7px">
</div>
<div class="sb l" style="top:500.2px">Power Consumption</div><div class="sb v" style="top:500.2px">85.8 % TDP</div>
<div class="sb b" style="top:500.2px">
<div class="f" style="height:23px"></div>
<div class="a" style="left:7px;bottom:20px;width:1px;height:3px;background:#f0f0f0"></div>
<div class="a" style="left:14px;bottom:20px;width:3px;height:3px;background:#f0f0f0"></div>
<div class="a" style="left:20px;bottom:21px;width:3px;height:2px;background:#f0f0f0"></div>
<div class="a" style="left:37px;bottom:21px;width:3px;height:2px;background:#f0f0f0"></div>
<div class="a" style="left:42px;bottom:21px;width:2px;height:2px;background:#f0f0f0"></div>
<div class="a" style="left:44px;bottom:21.5px;width:1px;height:1.5px;background:#f0f0f0"></div>
<div class="a" style="left:53px;bottom:21px;width:3px;height:2px;background:#f0f0f0"></div>
<div class="a" style="left:63px;bottom:21px;width:2px;height:2px;background:#f0f0f0"></div>
<div class="a" style="left:64px;bottom:21px;width:2px;height:2px;background:#f0f0f0"></div>
<div class="a" style="left:70px;bottom:21px;width:3px;height:2px;background:#f0f0f0"></div>
<div class="a" style="left:98px;bottom:19px;width:3px;height:4px;background:#f0f0f0"></div>
<div class="a" style="left:103px;bottom:21px;width:2px;height:2px;background:#f0f0f0"></div>
<div class="a" style="left:105px;bottom:22px;width:2px;height:1px;background:#f0f0f0"></div>
<div class="a" style="left:124px;bottom:21px;width:2px;height:2px;background:#f0f0f0"></div>
<div class="a" style="left:125px;bottom:21.5px;width:1px;height:1.5px;background:#f0f0f0"></div>
<div class="a" style="left:137px;bottom:20px;width:2px;height:3px;background:#f0f0f0"></div>
<div class="a" style="left:142px;bottom:21.5px;width:1px;height:1.5px;background:#f0f0f0"></div>
<div class="a" style="left:143px;bottom:14px;width:3px;height:9px;background:#f0f0f0"></div>
<div class="a" style="left:144px;bottom:21.5px;width:2px;height:1.5px;background:#f0f0f0"></div>
<div class="a" style="left:145px;bottom:21.5px;width:3px;height:1.5px;background:#f0f0f0"></div>
<div class="a" style="left:152px;bottom:21px;width:1px;height:2px;background:#f0f0f0"></div>
<div class="a" style="left:155px;bottom:20px;width:3px;height:3px;background:#f0f0f0"></div>
<div class="a" style="left:158px;bottom:21px;width:1px;height:2px;background:#f0f0f0"></div>
<div class="a" style="left:159px;bottom:22px;width:1px;height:1px;background:#f0f0f0"></div>
<div class="a" style="left:164px;bottom:21px;width:2px;height:2px;background:#f0f0f0"></div>
<div class="a" style="left:166px;bottom:20px;width:1px;height:3px;background:#f0f0f0"></div>
<div class="a" style="left:167px;bottom:22px;width:2px;height:1px;background:#f0f0f0"></div>
<div class="a" style="left:178px;bottom:22px;width:1px;height:1px;background:#f0f0f0"></div>
<div class="a" style="left:186px;bottom:21.5px;width:1px;height:1.5px;background:#f0f0f0"></div>
<div class="a" style="left:189px;bottom:21px;width:3px;height:2px;background:#f0f0f0"></div>
<div class="a" style="left:190px;bottom:20px;width:2px;height:3px;background:#f0f0f0"></div>
<div class="a" style="left:192px;bottom:21px;width:1px;height:2px;background:#f0f0f0"></div>
<div class="a" style="left:195px;bottom:19px;width:2px;height:4px;background:#f0f0f0"></div>
<div class="a" style="left:200px;bottom:19px;width:1px;height:4px;background:#f0f0f0"></div>
</div>
<div class="sb l" style="top:540.7px">PerfCap Reason</div><div class="sb v" style="top:540.7px">VRel</div>
<div class="sb b" style="top:540.7px">
<div class="f" style="height:29px;background:#2a9df4;left:0"></div>
</div>
<div class="sb l" style="top:581.1px">VDDC</div><div class="sb v" style="top:581.1px">1.0430 V</div>
<div class="sb b" style="top:581.1px">
<div class="f" style="height:12px"></div>
</div>
<div class="a" style="left:21px;top:1068px;width:20px;height:20px;background:#fff;border:1px solid #333"></div>
<div class="t bt" style="left:45.5px;top:1069px;font-size:15.8px">Log to file</div>
<div class="a" style="left:9px;top:1106.7px;width:326px;height:28.3px;background:#e3e3e3;border:1px solid #adadad"></div>
<div class="t bt" style="left:13px;top:1112px;font-size:16px">NVIDIA GeForce GTX 1080 Ti</div>
<svg class="a" style="left:314px;top:1117px" width="14" height="9" viewBox="0 0 14 9"><path d="M1 1.5 L7 7.5 L13 1.5" stroke="#444" stroke-width="1.3" fill="none"/></svg>
<div class="a bt" style="left:467px;top:1108px;width:111px;height:32.5px;background:#e1e1e1;border:1px solid #adadad;text-align:center;line-height:31px;font-size:15.8px">Close</div>
</div></div></div>
</body></html>
